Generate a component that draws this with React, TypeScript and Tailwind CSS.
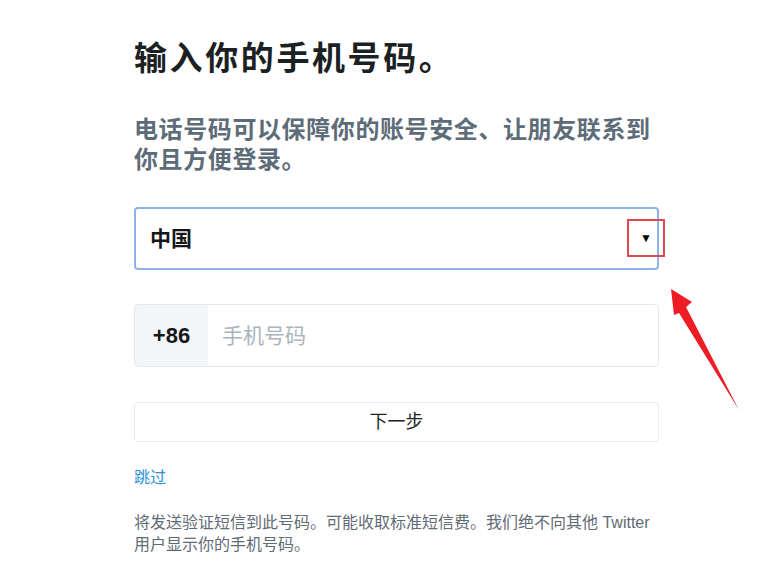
import React from 'react';

const cjk = { fontFamily: '"Liberation Sans", "Noto Sans CJK SC", sans-serif' };

export default function App() {
  return (
    <div className="relative min-h-[582px] w-[760px] bg-white" style={cjk}>
      <div className="w-[525px] ml-[134px] pt-[38px]">
        <h1 className="text-[33px] leading-[42px] font-bold text-[#1c1f23] tracking-[2.6px]">
          输入你的手机号码。
        </h1>

        <p className="mt-[35px] text-[24px] leading-[30px] font-bold text-[#5d6c78] tracking-[0.6px]">
          电话号码可以保障你的账号安全、让朋友联系到<br />你且方便登录。
        </p>

        <div className="relative mt-[32px] flex h-[63px] items-center rounded-[4px] border-2 border-[#8db3ea] px-[14px]">
          <span className="text-[21px] font-bold text-[#14171a]">中国</span>
          <div className="absolute right-[-8px] top-[10px] flex h-[38px] w-[38px] items-center justify-center border-2 border-[#e0474f]">
            <span className="text-[12px] leading-none text-black">▼</span>
          </div>
        </div>

        <div className="mt-[34px] flex h-[63px] overflow-hidden rounded-[4px] border border-[#e4e9ee]">
          <div className="flex w-[73px] items-center justify-center bg-[#f3f6f9] text-[22px] font-bold text-[#14171a]">
            +86
          </div>
          <div className="flex flex-1 items-center pl-[14px] text-[21px] text-[#aab4bd]">手机号码</div>
        </div>

        <button className="mt-[35px] flex h-[40px] w-full items-center justify-center rounded-[4px] border border-[#e6ecf0] bg-white text-[18px] text-[#222]">
          下一步
        </button>

        <div className="mt-[24px] text-[16px] leading-[24px] text-[#2b8fde]">跳过</div>

        <p className="mt-[22px] whitespace-nowrap text-[16px] leading-[22px] text-[#5f6b75]">
          将发送验证短信到此号码。可能收取标准短信费。我们绝不向其他 Twitter<br />用户显示你的手机号码。
        </p>
      </div>

      <svg className="absolute left-[660px] top-[280px]" width="90" height="140" viewBox="660 280 90 140">
        <polygon points="671,289 692,302 686,307 739,410 679,313 674,315" fill="#ee1c25" />
      </svg>
    </div>
  );
}
